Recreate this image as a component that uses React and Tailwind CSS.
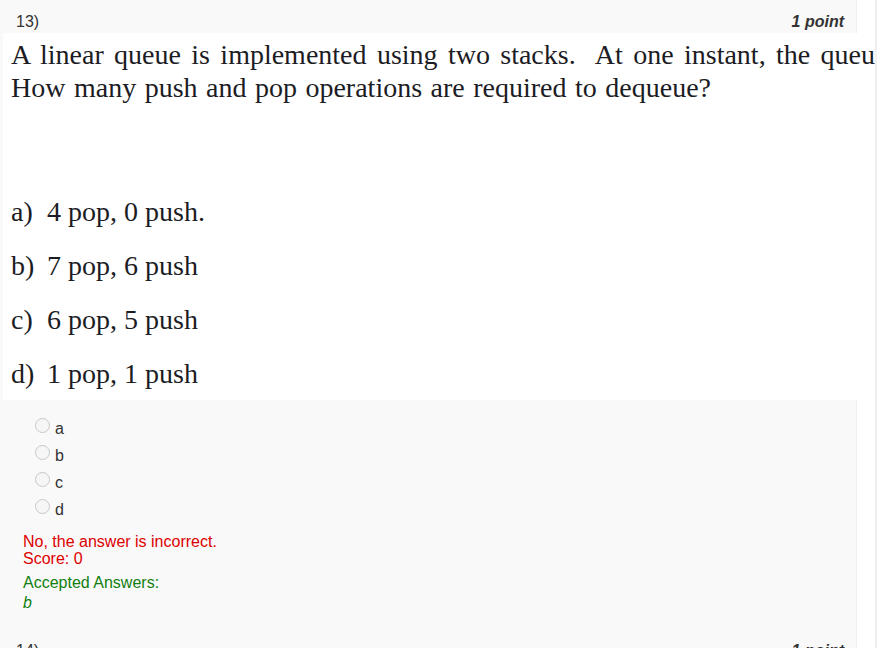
const choices = [
  { id: "a", text: "4 pop, 0 push." },
  { id: "b", text: "7 pop, 6 push" },
  { id: "c", text: "6 pop, 5 push" },
  { id: "d", text: "1 pop, 1 push" },
];

function QuestionHeader({ number }) {
  return (
    <div className="flex h-[33px] justify-between pt-3 pr-3 pl-4 text-base leading-5">
      <span>{number})</span>
      <strong className="font-bold italic">1 point</strong>
    </div>
  );
}

function Statement() {
  return (
    <div className="-mr-[19px] ml-[3px] h-[367px] overflow-hidden bg-white pt-[5px] pl-2 font-['Liberation_Serif',serif] text-[28px] leading-[33px] text-[#1c1c24]">
      <p className="text-justify whitespace-nowrap [text-align-last:justify]">
        A linear queue is implemented using two stacks.&nbsp; At one instant, the queu
      </p>
      <p className="max-w-[700px] text-justify whitespace-nowrap [text-align-last:justify]">
        How many push and pop operations are required to dequeue?
      </p>
      <ul className="mt-20">
        {choices.map((choice) => (
          <li key={choice.id} className="flex h-[54px] items-center">
            <span className="w-9">{choice.id})</span>
            <span>{choice.text}</span>
          </li>
        ))}
      </ul>
    </div>
  );
}

export default function App() {
  return (
    <main className="h-screen overflow-hidden border-r-2 border-[#f0f0f0] bg-white pr-[18px] font-['Liberation_Sans',Arial,sans-serif] text-[#333333]">
      <div className="border-r border-[#efefef] bg-[#f9f9f9]">
        <QuestionHeader number={13} />
        <Statement />
        <fieldset aria-label="Your answer" className="pt-[17px] pl-[35px]">
          {choices.map((choice) => (
            <label key={choice.id} className="flex h-[27px] w-fit gap-[5px] text-base leading-6">
              <input
                type="radio"
                name="question-13"
                disabled
                className="mt-px size-[15px] appearance-none rounded-full border border-[#c8c8c8] bg-[#f6f6f6]"
              />
              <span>{choice.id}</span>
            </label>
          ))}
        </fieldset>
        <div className="pt-2 pl-[23px] text-base">
          <p className="leading-[17px] text-[#dd0000]">No, the answer is incorrect.</p>
          <p className="leading-[17px] text-[#dd0000]">Score: 0</p>
          <p className="mt-1.5 leading-5 text-[#118011]">Accepted Answers:</p>
          <p className="leading-5 text-[#118011] italic">b</p>
        </div>
        <div className="mt-4">
          <QuestionHeader number={14} />
        </div>
      </div>
    </main>
  );
}
